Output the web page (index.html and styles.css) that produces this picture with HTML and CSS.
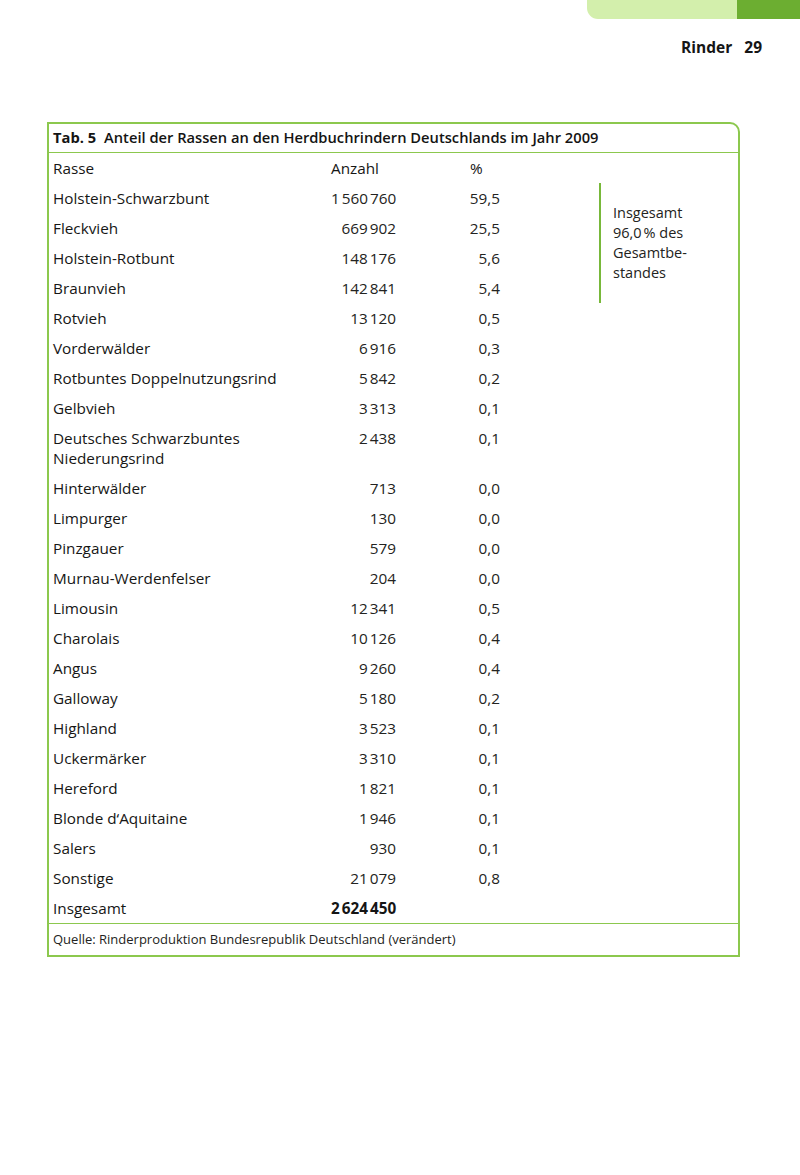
FILE: index.html
```html
<!DOCTYPE html>
<html lang="de">
<head>
<meta charset="utf-8">
<title>Rinder 29</title>
<link rel="stylesheet" href="styles.css">
</head>
<body>
<div class="page">
  <div class="tabs">
    <div class="tab-light"></div>
    <div class="tab-dark"></div>
  </div>
  <header class="running-head"><span>Rinder</span><span>29</span></header>

  <section class="table-box">
    <h2 class="caption"><span class="caption-num">Tab. 5</span><span class="caption-text">Anteil der Rassen an den Herdbuchrindern Deutschlands im Jahr 2009</span></h2>
    <table class="breeds">
      <colgroup>
        <col class="c-name"><col class="c-num"><col class="c-pct"><col class="c-gap"><col class="c-note">
      </colgroup>
      <thead>
        <tr><th class="name">Rasse</th><th class="num">Anzahl</th><th class="pct">%</th><th colspan="2"></th></tr>
      </thead>
      <tbody>
        <tr><td class="name">Holstein-Schwarzbunt</td><td class="num">1&#8239;560&#8239;760</td><td class="pct">59,5</td><td></td><td class="note" rowspan="4">Insgesamt<br>96,0&#8239;% des<br>Gesamtbe-<br>standes</td></tr>
        <tr><td class="name">Fleckvieh</td><td class="num">669&#8239;902</td><td class="pct">25,5</td><td></td></tr>
        <tr><td class="name">Holstein-Rotbunt</td><td class="num">148&#8239;176</td><td class="pct">5,6</td><td></td></tr>
        <tr><td class="name">Braunvieh</td><td class="num">142&#8239;841</td><td class="pct">5,4</td><td></td></tr>
        <tr><td class="name">Rotvieh</td><td class="num">13&#8239;120</td><td class="pct">0,5</td><td colspan="2"></td></tr>
        <tr><td class="name">Vorderwälder</td><td class="num">6&#8239;916</td><td class="pct">0,3</td><td colspan="2"></td></tr>
        <tr><td class="name">Rotbuntes Doppelnutzungsrind</td><td class="num">5&#8239;842</td><td class="pct">0,2</td><td colspan="2"></td></tr>
        <tr><td class="name">Gelbvieh</td><td class="num">3&#8239;313</td><td class="pct">0,1</td><td colspan="2"></td></tr>
        <tr><td class="name">Deutsches Schwarzbuntes<br>Niederungsrind</td><td class="num">2&#8239;438</td><td class="pct">0,1</td><td colspan="2"></td></tr>
        <tr><td class="name">Hinterwälder</td><td class="num">713</td><td class="pct">0,0</td><td colspan="2"></td></tr>
        <tr><td class="name">Limpurger</td><td class="num">130</td><td class="pct">0,0</td><td colspan="2"></td></tr>
        <tr><td class="name">Pinzgauer</td><td class="num">579</td><td class="pct">0,0</td><td colspan="2"></td></tr>
        <tr><td class="name">Murnau-Werdenfelser</td><td class="num">204</td><td class="pct">0,0</td><td colspan="2"></td></tr>
        <tr><td class="name">Limousin</td><td class="num">12&#8239;341</td><td class="pct">0,5</td><td colspan="2"></td></tr>
        <tr><td class="name">Charolais</td><td class="num">10&#8239;126</td><td class="pct">0,4</td><td colspan="2"></td></tr>
        <tr><td class="name">Angus</td><td class="num">9&#8239;260</td><td class="pct">0,4</td><td colspan="2"></td></tr>
        <tr><td class="name">Galloway</td><td class="num">5&#8239;180</td><td class="pct">0,2</td><td colspan="2"></td></tr>
        <tr><td class="name">Highland</td><td class="num">3&#8239;523</td><td class="pct">0,1</td><td colspan="2"></td></tr>
        <tr><td class="name">Uckermärker</td><td class="num">3&#8239;310</td><td class="pct">0,1</td><td colspan="2"></td></tr>
        <tr><td class="name">Hereford</td><td class="num">1&#8239;821</td><td class="pct">0,1</td><td colspan="2"></td></tr>
        <tr><td class="name">Blonde d‘Aquitaine</td><td class="num">1&#8239;946</td><td class="pct">0,1</td><td colspan="2"></td></tr>
        <tr><td class="name">Salers</td><td class="num">930</td><td class="pct">0,1</td><td colspan="2"></td></tr>
        <tr><td class="name">Sonstige</td><td class="num">21&#8239;079</td><td class="pct">0,8</td><td colspan="2"></td></tr>
        <tr class="total"><td class="name">Insgesamt</td><td class="num">2&#8239;624&#8239;450</td><td class="pct"></td><td colspan="2"></td></tr>
      </tbody>
    </table>
    <p class="source">Quelle: Rinderproduktion Bundesrepublik Deutschland (verändert)</p>
  </section>
</div>
</body>
</html>
```

FILE: styles.css
```css
* { box-sizing: border-box; }

html, body {
  margin: 0;
  padding: 0;
  background: #ffffff;
}

body {
  font-family: "Open Sans", "Noto Sans", "Liberation Sans", sans-serif;
  color: #161615;
}

.page {
  position: relative;
  width: 800px;
  height: 1175px;
  overflow: hidden;
}

.tabs {
  display: flex;
  justify-content: flex-end;
  height: 19px;
}

.tab-light {
  width: 150px;
  height: 19px;
  background: #d3efac;
  border-bottom-left-radius: 11px;
}

.tab-dark {
  width: 63px;
  height: 19px;
  background: #6cae31;
}

.running-head {
  display: flex;
  justify-content: flex-end;
  gap: 12px;
  margin: 18px 38px 0 0;
  font-size: 15.5px;
  font-weight: 700;
  line-height: 20px;
  color: #151515;
}

.table-box {
  margin: 65px 0 0 47px;
  width: 693px;
  border: 2px solid #8cc84e;
  border-top-right-radius: 10px;
}

.caption {
  margin: 0;
  padding: 3px 4px 5px;
  border-bottom: 1px solid #8cc84e;
  font-size: 14.7px;
  line-height: 20px;
  font-weight: 600;
  display: flex;
  gap: 8px;
  color: #141413;
}

.caption-num { font-weight: 700; }

.breeds {
  width: 100%;
  table-layout: fixed;
  border-collapse: collapse;
  font-size: 15.3px;
  line-height: 20px;
}

.c-name { width: 282px; }
.c-num { width: 65px; }
.c-pct { width: 104px; }
.c-gap { width: 100px; }

.breeds th,
.breeds td {
  padding: 5px 0;
  vertical-align: top;
}

.breeds th {
  font-weight: 500;
  text-align: left;
}

.breeds .name {
  padding-left: 4px;
  font-weight: 500;
}

.breeds td.num,
.breeds td.pct {
  text-align: right;
  white-space: nowrap;
  font-weight: 400;
  color: #232321;
}

.breeds th.pct {
  padding-left: 74px;
}

.breeds td.note {
  vertical-align: middle;
  border-left: 2px solid #78b83a;
  padding: 0 0 0 12px;
  font-size: 14.5px;
  line-height: 20px;
  font-weight: 400;
  color: #232321;
}

.breeds tr.total td.num {
  font-weight: 700;
  color: #151515;
}

.source {
  margin: 0;
  border-top: 1px solid #8cc84e;
  padding: 6px 4px 6px;
  font-size: 13px;
  line-height: 19px;
  color: #232321;
}
```
